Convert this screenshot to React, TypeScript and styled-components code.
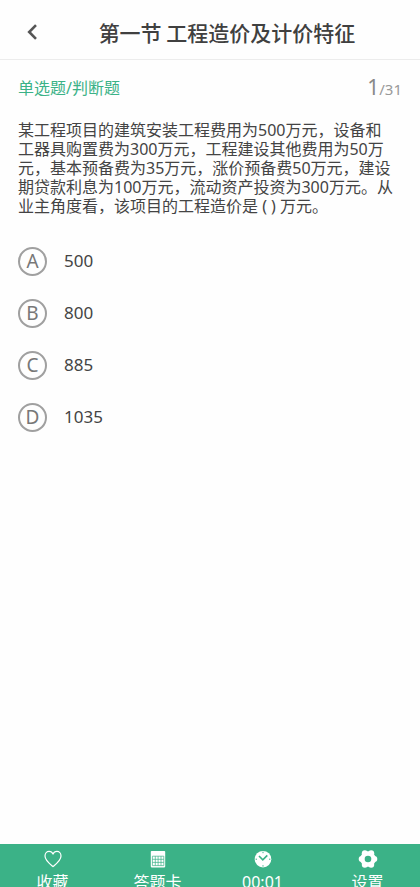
import React, { useState } from "react";
import styled, { createGlobalStyle } from "styled-components";

const GlobalStyle = createGlobalStyle`
  * { box-sizing: border-box; }
  body {
    margin: 0;
    background: #fefefe;
    color: #444;
    font-family: "Noto Sans", "Noto Sans CJK SC", sans-serif;
    overflow: hidden;
  }
  button { font: inherit; color: inherit; border: 0; padding: 0; background: none; cursor: pointer; }
`;

const Screen = styled.div`
  display: flex;
  flex-direction: column;
  height: 100vh;
  overflow: hidden;
`;

const Header = styled.header`
  display: grid;
  grid-template-columns: 64px 1fr 30px;
  align-items: center;
  height: 60px;
  padding-top: 4px;
  flex: none;
  border-bottom: 1px solid #ececec;
`;

const BackButton = styled.button`
  display: flex;
  align-items: center;
  justify-content: center;
  height: 44px;
`;

const Title = styled.h1`
  margin: 0;
  font-family: "Noto Sans CJK SC", sans-serif;
  font-size: 21px;
  line-height: 28px;
  font-weight: 500;
  text-align: center;
  white-space: nowrap;
  color: #404040;
`;

const Main = styled.main`
  flex: 1;
  padding: 14px 18px 0;
`;

const Meta = styled.div`
  display: flex;
  justify-content: space-between;
  align-items: center;
  height: 28px;
`;

const Kind = styled.span`
  font-size: 16px;
  line-height: 24px;
  color: #3bb287;
`;

const Counter = styled.span`
  font-size: 15px;
  line-height: 28px;
  color: #999;
`;

const Current = styled.span`
  font-size: 21px;
  color: #888;
`;

const Question = styled.p`
  margin: 19px 6px 0 0;
  font-size: 16px;
  line-height: 19px;
`;

const Options = styled.fieldset`
  display: flex;
  flex-direction: column;
  gap: 22px;
  margin: 30px 0 0;
  padding: 0;
  border: 0;
`;

const Option = styled.label`
  display: flex;
  align-items: center;
  gap: 17px;
  height: 30px;
  font-size: 17px;
  line-height: 24px;
  cursor: pointer;
`;

const Radio = styled.input`
  appearance: none;
  position: absolute;
  margin: 0;
  opacity: 0;
`;

const Letter = styled.span`
  display: flex;
  align-items: center;
  justify-content: center;
  width: 29px;
  height: 29px;
  border: 2px solid #a0a0a0;
  border-radius: 50%;
  font-size: 19px;
  line-height: 24px;
  color: #777;

  ${Radio}:checked + & {
    border-color: #3bb287;
    color: #3bb287;
  }
`;

const TabBar = styled.nav`
  display: grid;
  grid-template-columns: repeat(4, 1fr);
  flex: none;
  height: 43px;
  background: #3bb287;
  color: #fff;
  overflow: hidden;
`;

const Tab = styled.button`
  display: flex;
  flex-direction: column;
  align-items: center;
  gap: 1px;
  padding-top: 5px;
  font-size: 16px;
  line-height: 24px;
  height: 60px;

  svg { flex: none; display: block; }
`;

const HeartIcon = () => (
  <svg width="20" height="20" viewBox="0 0 20 20" fill="none" stroke="#fff" strokeWidth="1.2" strokeLinejoin="round" aria-hidden="true">
    <path d="M10 17.6C7.6 15.5 2 11.5 2 7C2 4.3 3.9 2.4 6.1 2.4C8 2.4 9.3 3.5 10 5.1C10.7 3.5 12 2.4 13.9 2.4C16.1 2.4 18 4.3 18 7C18 11.5 12.4 15.5 10 17.6Z" />
  </svg>
);

const SheetIcon = () => (
  <svg width="20" height="20" viewBox="0 0 20 20" aria-hidden="true">
    <rect x="2.8" y="2" width="14.4" height="16.4" rx="0.8" fill="#fff" />
    <path d="M4.4 7.2H15.8V16.6H4.4ZM4.4 10.3H15.8M4.4 13.4H15.8M7.3 7.2V16.6M10.1 7.2V16.6M13 7.2V16.6" fill="none" stroke="#3bb287" strokeWidth="0.7" />
  </svg>
);

const ClockIcon = () => (
  <svg width="20" height="20" viewBox="0 0 20 20" aria-hidden="true">
    <circle cx="10" cy="10.2" r="8.3" fill="#fff" />
    <path d="M6 7L9.8 10.8L14.3 6.4" fill="none" stroke="#3bb287" strokeWidth="1.6" />
    <path d="M10 2.8V4.2M10 16.2V17.6M2.6 10.2H4M16 10.2H17.4" stroke="#3bb287" strokeWidth="1" />
  </svg>
);

const GearIcon = () => (
  <svg width="20" height="20" viewBox="0 0 20 20" aria-hidden="true">
    <g fill="#fff">
      <circle cx="10" cy="10" r="7.8" />
      <circle cx="3.7" cy="10" r="3" />
      <circle cx="16.3" cy="10" r="3" />
      <circle cx="6.8" cy="4.2" r="3" />
      <circle cx="13.2" cy="4.2" r="3" />
      <circle cx="6.8" cy="15.8" r="3" />
      <circle cx="13.2" cy="15.8" r="3" />
    </g>
    <circle cx="10" cy="10" r="3.3" fill="#3bb287" />
  </svg>
);

const options = [
  { letter: "A", value: "500" },
  { letter: "B", value: "800" },
  { letter: "C", value: "885" },
  { letter: "D", value: "1035" },
];

const tabs = [
  { label: "收藏", Icon: HeartIcon },
  { label: "答题卡", Icon: SheetIcon },
  { label: "00:01", Icon: ClockIcon },
  { label: "设置", Icon: GearIcon },
];

export default function App() {
  const [answer, setAnswer] = useState("");

  return (
    <Screen lang="zh-CN">
      <GlobalStyle />
      <Header>
        <BackButton aria-label="返回">
          <svg width="12" height="18" viewBox="0 0 12 18" fill="none" stroke="#555" strokeWidth="2.6" aria-hidden="true">
            <path d="M10 2.2L3.2 9L10 15.8" />
          </svg>
        </BackButton>
        <Title>第一节 工程造价及计价特征</Title>
      </Header>
      <Main>
        <Meta>
          <Kind>单选题/判断题</Kind>
          <Counter><Current>1</Current>/31</Counter>
        </Meta>
        <Question>
          某工程项目的建筑安装工程费用为500万元，设备和工器具购置费为300万元，工程建设其他费用为50万元，基本预备费为35万元，涨价预备费50万元，建设期贷款利息为100万元，流动资产投资为300万元。从业主角度看，该项目的工程造价是 ( ) 万元。
        </Question>
        <Options aria-label="选项">
          {options.map(({ letter, value }) => (
            <Option key={letter}>
              <Radio
                type="radio"
                name="answer"
                value={letter}
                checked={answer === letter}
                onChange={() => setAnswer(letter)}
              />
              <Letter>{letter}</Letter>
              {value}
            </Option>
          ))}
        </Options>
      </Main>
      <TabBar>
        {tabs.map(({ label, Icon }) => (
          <Tab key={label}>
            <Icon />
            {label}
          </Tab>
        ))}
      </TabBar>
    </Screen>
  );
}
